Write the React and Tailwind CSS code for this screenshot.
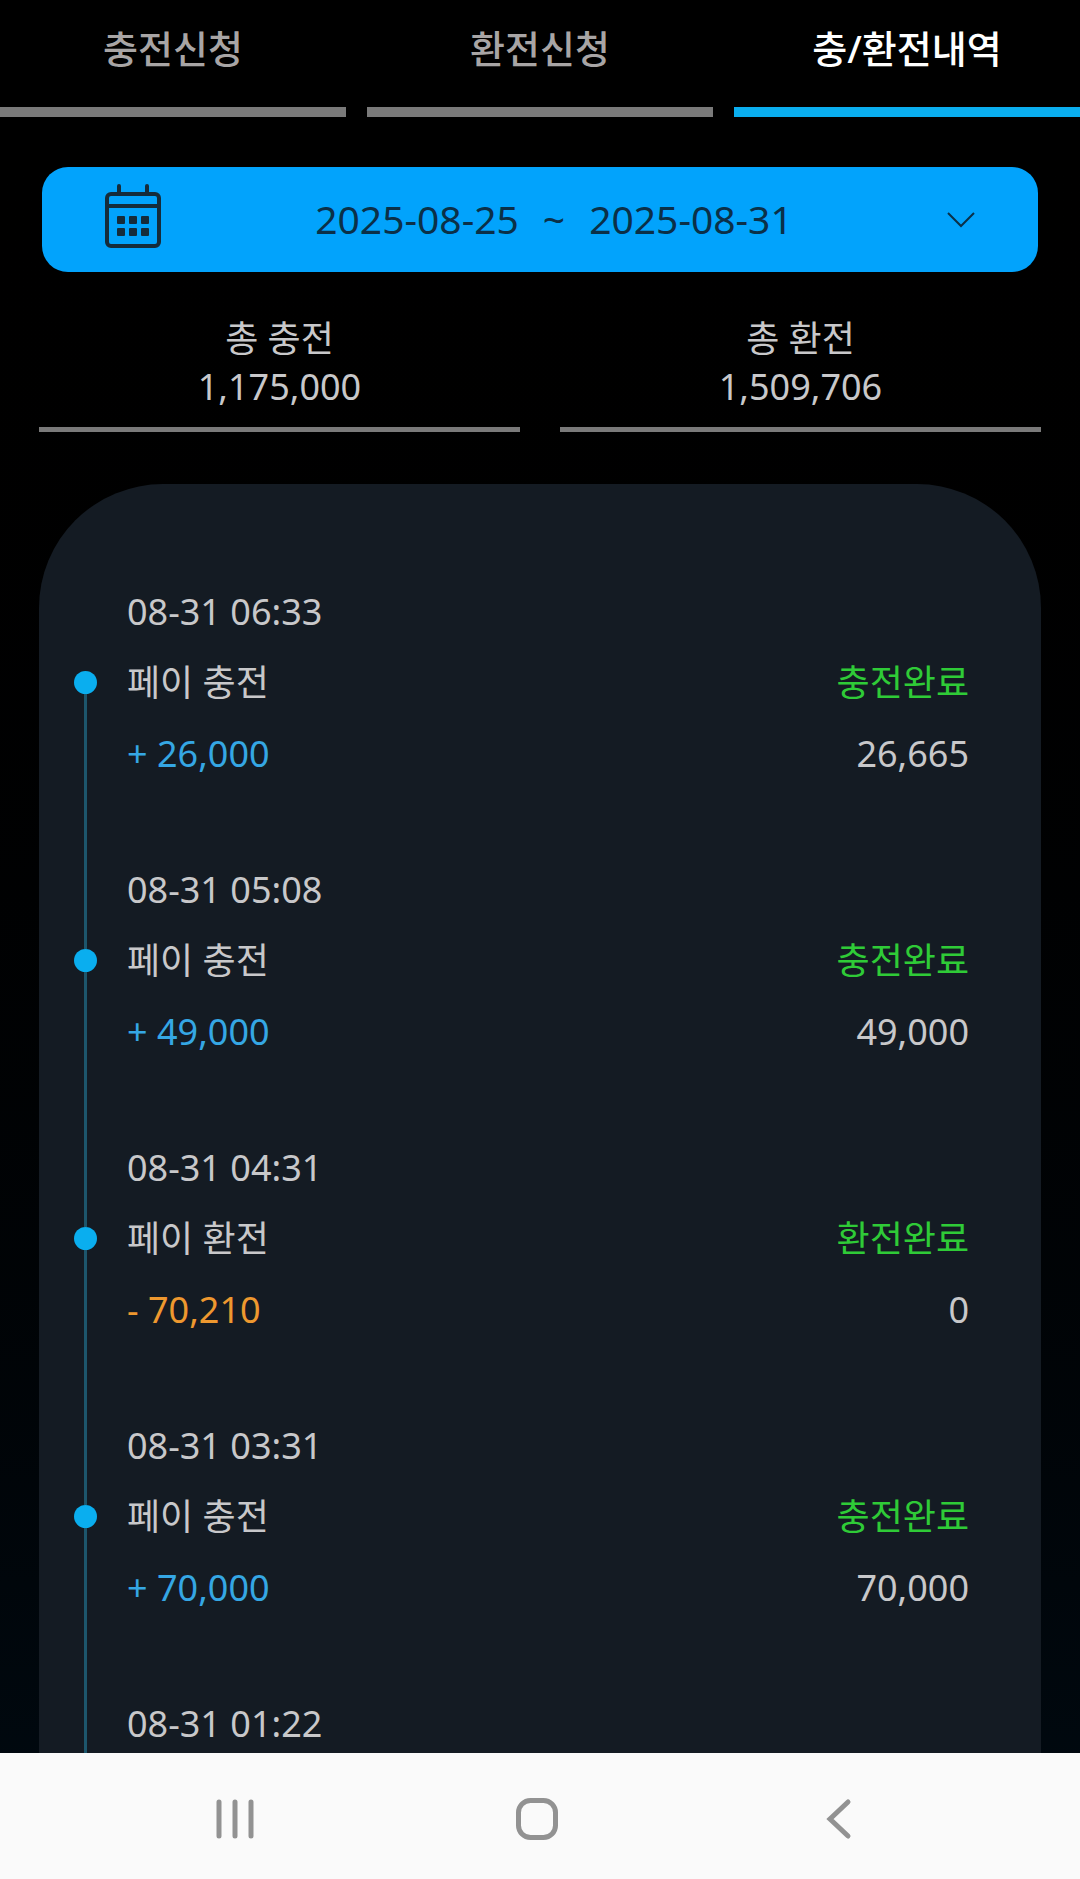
import React, { useState } from 'react';
import clsx from 'clsx';

const tabs = ['충전신청', '환전신청', '충/환전내역'];

const totals = [
  { label: '총 충전', value: '1,175,000' },
  { label: '총 환전', value: '1,509,706' },
];

const history = [
  { time: '08-31 06:33', type: '페이 충전', status: '충전완료', amount: 26000, balance: 26665 },
  { time: '08-31 05:08', type: '페이 충전', status: '충전완료', amount: 49000, balance: 49000 },
  { time: '08-31 04:31', type: '페이 환전', status: '환전완료', amount: -70210, balance: 0 },
  { time: '08-31 03:31', type: '페이 충전', status: '충전완료', amount: 70000, balance: 70000 },
  { time: '08-31 01:22' },
];

const formatNumber = (n) => n.toLocaleString('en-US');

function CalendarIcon() {
  return (
    <svg width="56" height="72" viewBox="0 0 56 72" fill="none" stroke="#152c3b" strokeWidth="4" aria-hidden="true">
      <rect x="2" y="10" width="52" height="52" rx="4" />
      <path d="M2 22h52" />
      <path d="M14 2v8M42 2v8" strokeLinecap="round" />
      <g fill="#152c3b" stroke="none">
        <rect x="12" y="32" width="8" height="8" rx="1" />
        <rect x="24" y="32" width="8" height="8" rx="1" />
        <rect x="36" y="32" width="8" height="8" rx="1" />
        <rect x="12" y="44" width="8" height="8" rx="1" />
        <rect x="24" y="44" width="8" height="8" rx="1" />
        <rect x="36" y="44" width="8" height="8" rx="1" />
      </g>
    </svg>
  );
}

function Tabs() {
  const [active, setActive] = useState(2);

  return (
    <nav className="grid grid-cols-3 gap-[21px]">
      {tabs.map((tab, idx) => (
        <button
          key={tab}
          onClick={() => setActive(idx)}
          className={clsx(
            'border-b-10 pt-5 pb-[31px] text-[38px] leading-14 font-medium cursor-pointer',
            idx === active ? 'border-[#0aaeef] text-white' : 'border-[#7a7a7a] text-[#a8a5a5]'
          )}
        >
          {tab}
        </button>
      ))}
    </nav>
  );
}

function HistoryItem({ item, first }) {
  return (
    <li className="flex gap-[30px]">
      <div className="flex flex-col items-center w-[23px]">
        <span className={clsx('h-[95px] w-[3px]', !first && 'bg-[#1d566c]')} />
        <span className="size-[23px] rounded-full bg-[#0aaeef]" />
        <span className="flex-1 w-[3px] bg-[#1d566c]" />
      </div>

      <div className="flex-1 pb-[65px] text-[36px] leading-[71px]">
        <div>{item.time}</div>
        {item.type && (
          <>
            <div className="flex justify-between">
              <span>{item.type}</span>
              <span className="text-[#2fcb37]">{item.status}</span>
            </div>
            <div className="flex justify-between">
              <span className={item.amount < 0 ? 'text-[#ee982f]' : 'text-[#35a7e4]'}>
                {item.amount < 0 ? '-' : '+'} {formatNumber(Math.abs(item.amount))}
              </span>
              <span>{formatNumber(item.balance)}</span>
            </div>
          </>
        )}
      </div>
    </li>
  );
}

function NavigationBar() {
  return (
    <footer className="grid grid-cols-3 h-[126px] shrink-0 pt-1.5 pl-21 pr-[90px] bg-[#fafafa]">
      <button aria-label="최근 앱" className="flex items-center justify-center">
        <svg width="44" height="44" viewBox="0 0 44 44" stroke="#929292" strokeWidth="5" strokeLinecap="round">
          <path d="M6 5v34M22 5v34M38 5v34" />
        </svg>
      </button>
      <button aria-label="홈" className="flex items-center justify-center">
        <svg width="44" height="44" viewBox="0 0 44 44" fill="none" stroke="#929292" strokeWidth="5">
          <rect x="3.5" y="3.5" width="37" height="37" rx="12" />
        </svg>
      </button>
      <button aria-label="뒤로" className="flex items-center justify-center">
        <svg
          width="44"
          height="44"
          viewBox="0 0 44 44"
          fill="none"
          stroke="#929292"
          strokeWidth="5"
          strokeLinecap="round"
        >
          <path d="M31 5L13 22l18 17" />
        </svg>
      </button>
    </footer>
  );
}

export default function App() {
  return (
    <div
      className="
        flex flex-col h-screen
        bg-gradient-to-b from-black to-[#000a11]
        font-['Noto_Sans','Noto_Sans_CJK_KR',sans-serif]
        text-[#c8c8ca]
      "
    >
      <main className="flex-1 min-h-0 overflow-y-auto [scrollbar-width:none]">
        <Tabs />

        <div className="px-[42px] pt-[50px]">
          <button
            className="
              flex items-center justify-between
              w-full h-[105px] px-[63px]
              rounded-[26px]
              bg-[#02a3fc]
              text-[39px] text-[#0b3048]
              cursor-pointer
            "
          >
            <CalendarIcon />
            <span className="flex gap-6">
              <span>2025-08-25</span>
              <span>~</span>
              <span>2025-08-31</span>
            </span>
            <svg width="28" height="16" viewBox="0 0 28 16" fill="none" stroke="#0b3048" strokeWidth="2" aria-hidden="true">
              <path d="M1 1l13 13L27 1" />
            </svg>
          </button>
        </div>

        <dl className="grid grid-cols-2 gap-10 px-[39px] pt-[43px]">
          {totals.map((total) => (
            <div
              key={total.label}
              className="border-b-5 border-[#7a7a7a] pb-4 text-center text-[36px] leading-12"
            >
              <dt>{total.label}</dt>
              <dd>{total.value}</dd>
            </div>
          ))}
        </dl>

        <section className="mx-[39px] mt-[52px] pt-[92px] pl-[35px] pr-[72px] rounded-t-[124px] bg-[#141b23]">
          <ul>
            {history.map((item, idx) => (
              <HistoryItem key={item.time} item={item} first={idx === 0} />
            ))}
          </ul>
        </section>
      </main>

      <NavigationBar />
    </div>
  );
}
